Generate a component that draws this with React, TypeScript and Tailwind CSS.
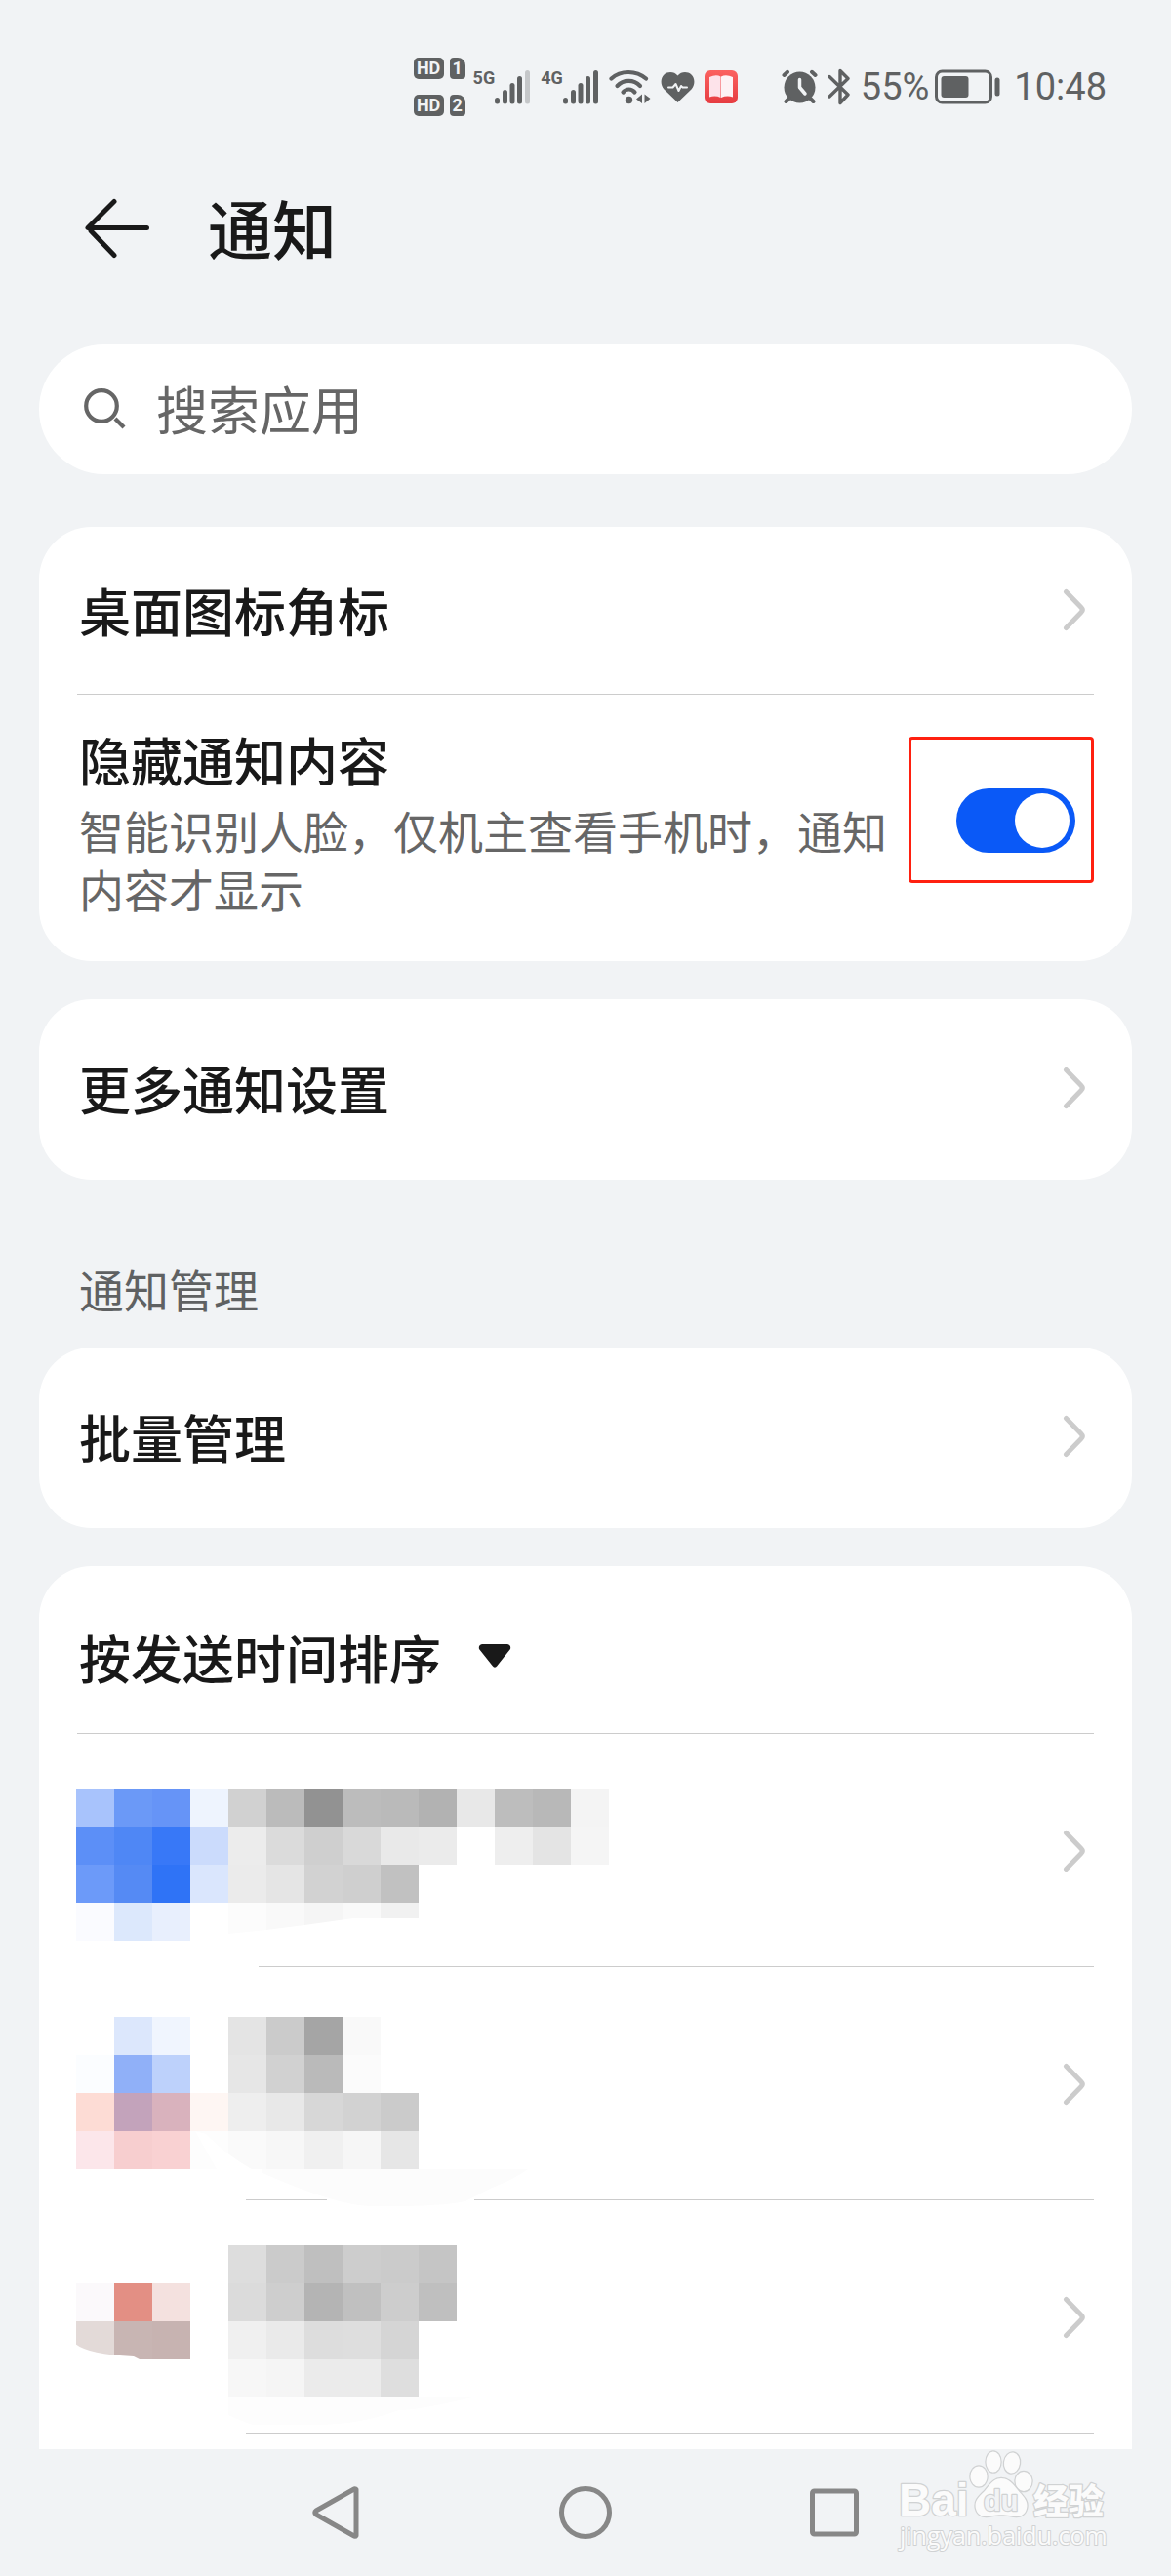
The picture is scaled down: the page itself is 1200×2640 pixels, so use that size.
import { useState } from "react";

// ── Data ──────────────────────────────────────────────────────────────────────

interface Cell {
  col: number;
  row: number;
  fill: string;
}

interface AppItem {
  id: string;
  top: number;
  cells: Cell[];
}

const CELL = 39;

function toCells(rows: string[][]): Cell[] {
  return rows.flatMap((fills, row) =>
    fills.map((fill, col) => ({ col, row, fill })).filter((c) => c.fill !== ""),
  );
}

const APPS: AppItem[] = [
  {
    id: "app-1",
    top: 56,
    cells: toCells([
      ["#a8c3fc", "#6b99f7", "#6694f7", "#eef4fe", "#d1d1d1", "#bbbbbb", "#929292", "#bcbcbc", "#bababa", "#b2b2b2", "#e8e8e8", "#bdbdbd", "#b8b8b8", "#f4f4f4"],
      ["#5c8ff7", "#4f87f5", "#3878f7", "#cbdbfc", "#ececec", "#dbdbdb", "#cfcfcf", "#d9d9d9", "#e9e9e9", "#ebebeb", "", "#eeeeee", "#e4e4e4", "#f5f5f5"],
      ["#6c9af9", "#558af4", "#2f73f6", "#dae6fd", "#ebebeb", "#e5e5e5", "#d2d2d2", "#cfcfcf", "#c1c1c1"],
      ["#fafbff", "#dce8fc", "#e8effd", "", "#fcfcfc", "#f9f9f9", "#f5f5f5", "#f9f9f9", "#f1f1f1"],
    ]),
  },
  {
    id: "app-2",
    top: 51,
    cells: toCells([
      ["", "#dce7fc", "#f0f5fe", "", "#e4e4e4", "#cbcbcb", "#a5a5a5", "#f9f9f9"],
      ["#fbfdff", "#90b0f8", "#bdd1fb", "", "#e6e6e6", "#d1d1d1", "#bababa", "#fbfbfb"],
      ["#fddcd5", "#c3a3bb", "#d9b2bd", "#fef6f3", "#eeeeee", "#e8e8e8", "#d7d7d7", "#d2d2d2", "#cbcbcb"],
      ["#fce6ea", "#f7cecf", "#f9d1d2", "#fdfdfd", "#fafafa", "#f7f7f7", "#f0f0f0", "#f6f6f6", "#e6e6e6"],
    ]),
  },
  {
    id: "app-3",
    top: 46,
    cells: toCells([
      ["", "", "", "", "#dddddd", "#cbcbcb", "#bfbfbf", "#cdcdcd", "#cbcbcb", "#c5c5c5"],
      ["#fbf9fb", "#e38f84", "#f4e1df", "", "#dbdbdb", "#cecece", "#b4b4b4", "#c0c0c0", "#cdcdcd", "#bfbfbf"],
      ["#e3dad8", "#c8b5b3", "#c7b3b1", "", "#f0f0f0", "#eaeaea", "#dddddd", "#dedede", "#d5d5d5"],
      ["", "", "", "", "#f7f7f7", "#f5f5f5", "#ebebeb", "#ebebeb", "#dedede"],
    ]),
  },
];

// ── Icons ─────────────────────────────────────────────────────────────────────

function Chevron() {
  return (
    <svg className="mr-2 shrink-0" width="24" height="44" viewBox="0 0 24 44" fill="none" stroke="#cccccc" strokeWidth="5" strokeLinecap="round" strokeLinejoin="round">
      <path d="M3.500 3.500 L19 19.500 Q21.500 22 19 24.500 L3.500 40.500" />
    </svg>
  );
}

function SignalBars({ weak }: { weak?: boolean }) {
  return (
    <svg width="37" height="36" viewBox="0 0 37 36" fill="#5f6162">
      <rect x="0" y="29" width="5" height="6.500" rx="2.500" />
      <rect x="8" y="21" width="5" height="14.500" rx="2.500" />
      <rect x="15.500" y="14" width="5" height="21.500" rx="2.500" />
      <rect x="23" y="7" width="5" height="28.500" rx="2.500" />
      <rect x="31" y="1" width="5" height="34.500" rx="2.500" fill={weak ? "#c5c7c9" : "#5f6162"} />
    </svg>
  );
}

function WifiIcon() {
  return (
    <svg width="43" height="36" viewBox="0 0 43 36" fill="none" stroke="#5f6162" strokeWidth="4.200" strokeLinecap="round">
      <path d="M2.500 9.500 C12 0.800 28 0.800 38 9.500" />
      <path d="M8.500 17 C15 10.200 25.500 10.200 32 17" />
      <path d="M14.500 23.500 C18 19.500 23 19.500 26.500 23.500" />
      <circle cx="20.500" cy="31.500" r="3.700" fill="#5f6162" stroke="none" />
      <path d="M34 25.500 L34 35 L28 30.500 Z M36.500 25.500 L42.500 30 L36.500 35 Z" fill="#5f6162" stroke="none" />
    </svg>
  );
}

function HeartIcon() {
  return (
    <svg width="35" height="33" viewBox="0 0 35 33">
      <path d="M17.500 32 L3.500 18.500 C-0.500 14 -0.300 7 3.500 3.500 C7.500 0 14 0.300 17.500 4.500 C21 0.300 27.500 0 31.500 3.500 C35.300 7 35.500 14 31.500 18.500 Z" fill="#5f6162" />
      <path d="M8 16.500 H12.500 L15.500 13 L18.500 20 L21 15 L22.500 16.500 H27" fill="none" stroke="#f1f3f5" strokeWidth="2" strokeLinecap="round" strokeLinejoin="round" />
    </svg>
  );
}

function BookIcon() {
  return (
    <svg width="34" height="34" viewBox="0 0 34 34">
      <defs>
        <linearGradient id="book" x1="0" y1="0" x2="0" y2="1">
          <stop offset="0" stopColor="#fb6260" />
          <stop offset="1" stopColor="#e63c41" />
        </linearGradient>
      </defs>
      <rect width="34" height="34" rx="6" fill="url(#book)" />
      <path d="M5 7 Q12 4 16.500 6.500 V28 Q11 25.500 5 27.500 Z" fill="#fde3ea" />
      <path d="M29 7 Q22 4 17 6.500 V28 Q23 25.500 29 27.500 Z" fill="#fdf3f5" />
    </svg>
  );
}

function AlarmIcon() {
  return (
    <svg width="37" height="36" viewBox="0 0 37 36" fill="none" stroke="#5f6162" strokeWidth="4" strokeLinecap="round">
      <circle cx="18.500" cy="18.500" r="16" fill="#5f6162" stroke="none" />
      <path d="M2.500 6 L6 2.800 M34.500 6 L31 2.800 M7.500 30 L4.500 33 M29.500 30 L32.500 33" />
      <path d="M18.500 10.500 V18.500 L24 25" stroke="#f1f3f5" strokeWidth="3.500" strokeLinejoin="round" />
    </svg>
  );
}

function BluetoothIcon() {
  return (
    <svg width="24" height="38" viewBox="0 0 24 38" fill="none" stroke="#5f6162" strokeWidth="3.400" strokeLinecap="round" strokeLinejoin="round">
      <path d="M2 8.500 L21 27 L13 35.500 V2.500 L21 10.500 L2 29" />
    </svg>
  );
}

function BatteryIcon() {
  return (
    <svg width="67" height="36" viewBox="0 0 67 36">
      <rect x="1.500" y="2" width="56" height="32" rx="6" fill="none" stroke="#5f6162" strokeWidth="3" />
      <rect x="6.500" y="7" width="28" height="22" rx="3" fill="#5f6162" />
      <rect x="61.500" y="8.500" width="5" height="19" rx="2.500" fill="#5f6162" />
    </svg>
  );
}

// ── Status bar ────────────────────────────────────────────────────────────────

function SimBadge({ slot }: { slot: number }) {
  return (
    <div className="flex gap-1.5 text-[18px] leading-[22px] font-bold text-[#f1f3f5]">
      <span className="w-[31px] rounded-[5px] bg-[#5f6162] text-center">HD</span>
      <span className="w-4 rounded-[4px] rounded-tr-[8px] bg-[#5f6162] text-center">{slot}</span>
    </div>
  );
}

function StatusBar() {
  return (
    <header className="flex h-[178px] items-center justify-end pr-[66px] font-['Roboto',sans-serif] text-[#5f6162]">
      <div className="mr-2 flex flex-col gap-4">
        <SimBadge slot={1} />
        <SimBadge slot={2} />
      </div>
      <div className="mr-2.5 flex items-center">
        <span className="self-start text-[18px] leading-[18px] font-bold">5G</span>
        <SignalBars weak />
      </div>
      <div className="mr-2.5 flex items-center">
        <span className="self-start text-[18px] leading-[18px] font-bold">4G</span>
        <SignalBars />
      </div>
      <div className="mr-[45px] flex items-center gap-2.5">
        <WifiIcon />
        <HeartIcon />
        <BookIcon />
      </div>
      <div className="flex items-center gap-2.5">
        <AlarmIcon />
        <BluetoothIcon />
        <span className="text-[38px] leading-[48px]">55%</span>
      </div>
      <div className="ml-1.5 flex items-center gap-3.5">
        <BatteryIcon />
        <span className="text-[38px] leading-[48px]">10:48</span>
      </div>
    </header>
  );
}

// ── Rows ──────────────────────────────────────────────────────────────────────

function LinkCard({ label }: { label: string }) {
  return (
    <section className="rounded-[54px] bg-white px-[39px]">
      <button className="flex h-[185px] w-full cursor-pointer items-center justify-between pb-1 pl-0.5 text-left text-[53px] leading-[72px] font-medium">
        {label}
        <Chevron />
      </button>
    </section>
  );
}

function AppRow({ app }: { app: AppItem }) {
  return (
    <li>
      <button aria-label="应用通知设置" className="flex h-[239px] w-full cursor-pointer items-center justify-between">
        <svg className="overflow-visible" width="600" height="239" viewBox="0 0 600 239" shapeRendering="crispEdges">
          {app.id === "app-1" && <path d="M186 238.500 H1042" stroke="#cccccc" />}
          {app.id === "app-2" && <path d="M173 238.500 H256 M407 238.500 H1042" stroke="#cccccc" />}
          {app.id === "app-3" && <path d="M173 238.500 H1042" stroke="#cccccc" />}
          {app.cells.map((c) => (
            <rect key={`${c.col}-${c.row}`} x={c.col * CELL - 1} y={app.top + c.row * CELL} width={CELL} height={CELL} fill={c.fill} />
          ))}
          {app.id === "app-1" && (
            <path d="M155 205 L194 201 L233 196 L283 189 H350 V213 H155 Z" fill="#ffffff" shapeRendering="auto" />
          )}
          {app.id === "app-2" && (
            <g shapeRendering="auto">
              <path d="M121 168 L132 171 Q152 192 179 207 H143 Z" fill="#ffffff" />
              <path d="M190 207 H462 Q445 219 425 226 L398 240 Q370 246 300 245 Q265 244 190 211 Z" fill="#fcfcfc" />
            </g>
          )}
          {app.id === "app-3" && (
            <g shapeRendering="auto">
              <path d="M-2 147 Q12 158 58 160 L66 164 H-2 Z" fill="#ffffff" />
              <path d="M155 202 H405 Q350 215 330 215 Q290 230 245 230 H180 Q165 225 155 220 Z" fill="#fdfdfd" />
            </g>
          )}
        </svg>
        <Chevron />
      </button>
    </li>
  );
}

// ── Watermark ─────────────────────────────────────────────────────────────────

function Watermark() {
  return (
    <svg className="pointer-events-none absolute right-[60px] bottom-[24px]" width="224" height="106" viewBox="0 0 224 106" fill="#fbfbfb" stroke="#d0d2d3" strokeWidth="2.500" strokeLinejoin="round" paintOrder="stroke">
      <text x="5" y="68" fontFamily="Liberation Sans, sans-serif" fontWeight="700" fontSize="46">Bai</text>
      <ellipse cx="87" cy="28" rx="8.500" ry="10.500" />
      <ellipse cx="102" cy="13" rx="7.500" ry="10.500" />
      <ellipse cx="121" cy="14" rx="8" ry="10.500" transform="rotate(8 121 14)" />
      <ellipse cx="133" cy="33" rx="8.500" ry="10" />
      <path d="M110 30 C118 30 122 36 127 42 C133 49 138 53 136 61 C134 69 127 70 119 68 C112 67 108 67 101 68 C93 70 86 69 84 61 C82 53 87 49 93 43 C98 37 102 30 110 30 Z" />
      <text x="92" y="63" fontFamily="Liberation Sans, sans-serif" fontWeight="700" fontSize="29" fill="#f1f3f5">du</text>
      <text x="143" y="67" fontFamily="Noto Sans CJK SC, sans-serif" fontWeight="900" fontSize="36">经验</text>
      <text x="6" y="98" fontFamily="Open Sans, sans-serif" fontSize="25" strokeWidth="2">jingyan.baidu.com</text>
    </svg>
  );
}

// ── Screen ────────────────────────────────────────────────────────────────────

export default function App() {
  const [hidden, setHidden] = useState(true);

  return (
    <div className="relative flex min-h-screen flex-col bg-[#f1f3f5] font-['Noto_Sans_CJK_SC',sans-serif] text-[#191919]">
      <StatusBar />

      <main className="flex flex-1 flex-col px-10">
        <div className="flex h-[112px] items-center gap-[59px] pl-[46px]">
          <button aria-label="返回" className="cursor-pointer">
            <svg width="68" height="62" viewBox="0 0 68 62" fill="none" stroke="#191919" strokeWidth="5" strokeLinecap="round">
              <path d="M31 3.500 L4 30.500 H64.500" strokeLinejoin="round" />
              <path d="M7 33.500 L31 58.500" />
            </svg>
          </button>
          <h1 className="pb-1 text-[66px] leading-[96px] font-medium">通知</h1>
        </div>

        <label className="mt-[63px] flex h-[133px] items-center gap-[31px] rounded-full bg-white px-[46px]">
          <svg width="43" height="43" viewBox="0 0 43 43" fill="none" stroke="#666666" strokeWidth="4.200">
            <circle cx="18" cy="18" r="15.800" />
            <path d="M32 31 L41 40" />
          </svg>
          <input type="search" aria-label="搜索应用" placeholder="搜索应用" className="min-w-0 flex-1 pb-1 text-[53px] leading-[72px] outline-none placeholder:text-[#666666]" />
        </label>

        <section className="mt-[54px] rounded-[54px] bg-white px-[39px]">
          <button className="flex h-[172px] w-full cursor-pointer items-center justify-between border-b border-[#cccccc] pb-0.5 pl-0.5 text-left text-[53px] leading-[72px] font-medium">
            桌面图标角标
            <Chevron />
          </button>
          <div className="flex h-[273px] items-start">
            <label htmlFor="hide-content" className="flex-1 pt-[30px] pl-0.5">
              <span className="block text-[53px] leading-[72px] font-medium">隐藏通知内容</span>
              <span className="mt-1.5 block text-[46px] leading-[60px] text-[#666666]">智能识别人脸，仅机主查看手机时，通知内容才显示</span>
            </label>
            <div className="mt-[43px] flex h-[150px] w-[190px] shrink-0 justify-end rounded-[4px] border-[3px] border-[#ff2010] pt-[50px] pr-[16px]">
              <input
                id="hide-content"
                type="checkbox"
                role="switch"
                checked={hidden}
                onChange={(e) => setHidden(e.target.checked)}
                className="flex h-[66px] w-[122px] cursor-pointer appearance-none items-center rounded-full bg-[#cccccc] px-[6px] before:size-[56px] before:rounded-full before:bg-white checked:justify-end checked:bg-[#0a59f7]"
              />
            </div>
          </div>
        </section>

        <div className="mt-[39px]">
          <LinkCard label="更多通知设置" />
        </div>

        <h2 className="mt-[78px] mb-[28px] pl-[41px] text-[46px] leading-[66px] text-[#5f6162]">通知管理</h2>
        <LinkCard label="批量管理" />

        <section className="mt-[39px] flex-1 rounded-t-[54px] bg-white px-[39px]">
          <div className="flex h-[172px] items-center gap-[38px] border-b border-[#cccccc] pt-3.5 pl-0.5">
            <select aria-label="排序方式" className="cursor-pointer appearance-none text-[53px] leading-[72px] font-medium outline-none">
              <option>按发送时间排序</option>
            </select>
            <svg className="pointer-events-none" width="34" height="25" viewBox="0 0 34 25" fill="#191919">
              <path d="M4 0 H30 Q34 1 33 5 L19.500 22 Q17 25.500 14.500 22 L1 5 Q0 1 4 0 Z" />
            </svg>
          </div>
          <ul>
            {APPS.map((app) => (
              <AppRow key={app.id} app={app} />
            ))}
          </ul>
        </section>
      </main>

      <nav className="flex h-[130px] items-center justify-center">
        <button aria-label="后退" className="flex w-[255px] cursor-pointer justify-center">
          <svg width="54" height="56" viewBox="0 0 54 56" fill="none" stroke="#878787" strokeWidth="5" strokeLinejoin="round">
            <path d="M47 4.500 V51.500 Q46 53 44 51.500 L6 30 Q3.500 28 6 26 L44 4.500 Q46 3 47 4.500 Z" />
          </svg>
        </button>
        <button aria-label="主屏幕" className="flex w-[255px] cursor-pointer justify-center">
          <svg width="56" height="56" viewBox="0 0 56 56" fill="none" stroke="#878787" strokeWidth="5">
            <circle cx="28" cy="28" r="24.500" />
          </svg>
        </button>
        <button aria-label="最近任务" className="flex w-[255px] cursor-pointer justify-center">
          <svg width="50" height="50" viewBox="0 0 50 50" fill="none" stroke="#878787" strokeWidth="5">
            <rect x="2.500" y="3" width="45" height="44" rx="2" />
          </svg>
        </button>
      </nav>

      <Watermark />
    </div>
  );
}
